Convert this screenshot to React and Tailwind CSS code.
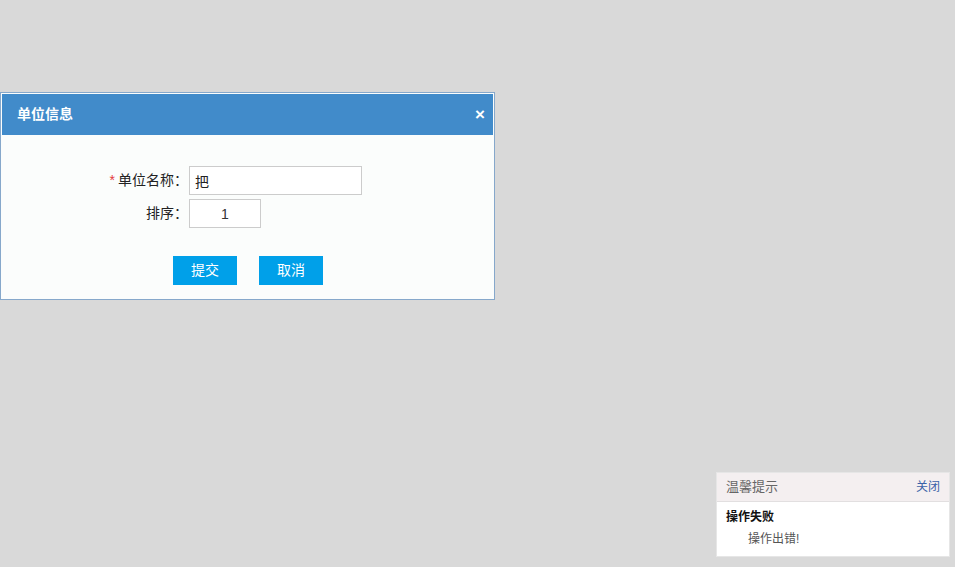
import { useState } from "react";

const FONT = {
  fontFamily: '"Liberation Sans", "Noto Sans CJK SC", sans-serif',
};

function UnitDialog() {
  const [name, setName] = useState("把");
  const [order, setOrder] = useState("1");

  return (
    <div className="w-[495px] border border-[#86a8cb] bg-[#fbfdfc] p-px">
      <div className="flex h-[41px] items-center justify-between bg-[#418bca] pl-[15px] pr-[8px]">
        <span className="text-[14px] font-bold text-white">单位信息</span>
        <span className="text-[17px] font-black leading-none text-white">×</span>
      </div>
      <form className="flex flex-col pb-[13px] pt-[31px]">
        <div className="flex flex-col gap-[4px]">
          <div className="flex items-center">
            <label className="w-[187px] pr-[1px] text-right text-[14px] text-[#222]">
              <span className="mr-[3px] text-[#e4393c]">*</span>单位名称：
            </label>
            <input
              value={name}
              onChange={(e) => setName(e.target.value)}
              className="h-[29px] w-[173px] border border-[#cccccc] bg-white px-[5px] text-[14px] text-[#222] outline-none"
            />
          </div>
          <div className="flex items-center">
            <label className="w-[187px] pr-[1px] text-right text-[14px] text-[#222]">
              排序：
            </label>
            <input
              value={order}
              onChange={(e) => setOrder(e.target.value)}
              className="h-[29px] w-[72px] border border-[#cccccc] bg-white text-center text-[14px] text-[#333] outline-none"
            />
          </div>
        </div>
        <div className="mt-[28px] flex justify-center gap-[22px] pl-[1px]">
          <button
            type="button"
            className="h-[29px] w-[64px] bg-[#00a0e9] text-[14px] text-white"
          >
            提交
          </button>
          <button
            type="button"
            className="h-[29px] w-[64px] bg-[#00a0e9] text-[14px] text-white"
          >
            取消
          </button>
        </div>
      </form>
    </div>
  );
}

function Toast() {
  return (
    <div className="fixed bottom-[10px] right-[5px] w-[234px] border border-[#e6e6e6] bg-white">
      <div className="flex h-[29px] items-center justify-between border-b border-[#e2dfe0] bg-[#f4eff0] px-[9px]">
        <span className="text-[13px] text-[#666]">温馨提示</span>
        <span className="text-[12px] text-[#3a62a8]">关闭</span>
      </div>
      <div className="px-[9px] pb-[8px] pt-[6px]">
        <div className="text-[12px] font-bold leading-[18px] text-[#111]">
          操作失败
        </div>
        <div className="pl-[22px] pt-[4px] text-[12px] leading-[18px] text-[#555]">
          操作出错!
        </div>
      </div>
    </div>
  );
}

export default function App() {
  return (
    <div className="min-h-[567px] bg-[#d9d9d9] pt-[92px]" style={FONT}>
      <UnitDialog />
      <Toast />
    </div>
  );
}
